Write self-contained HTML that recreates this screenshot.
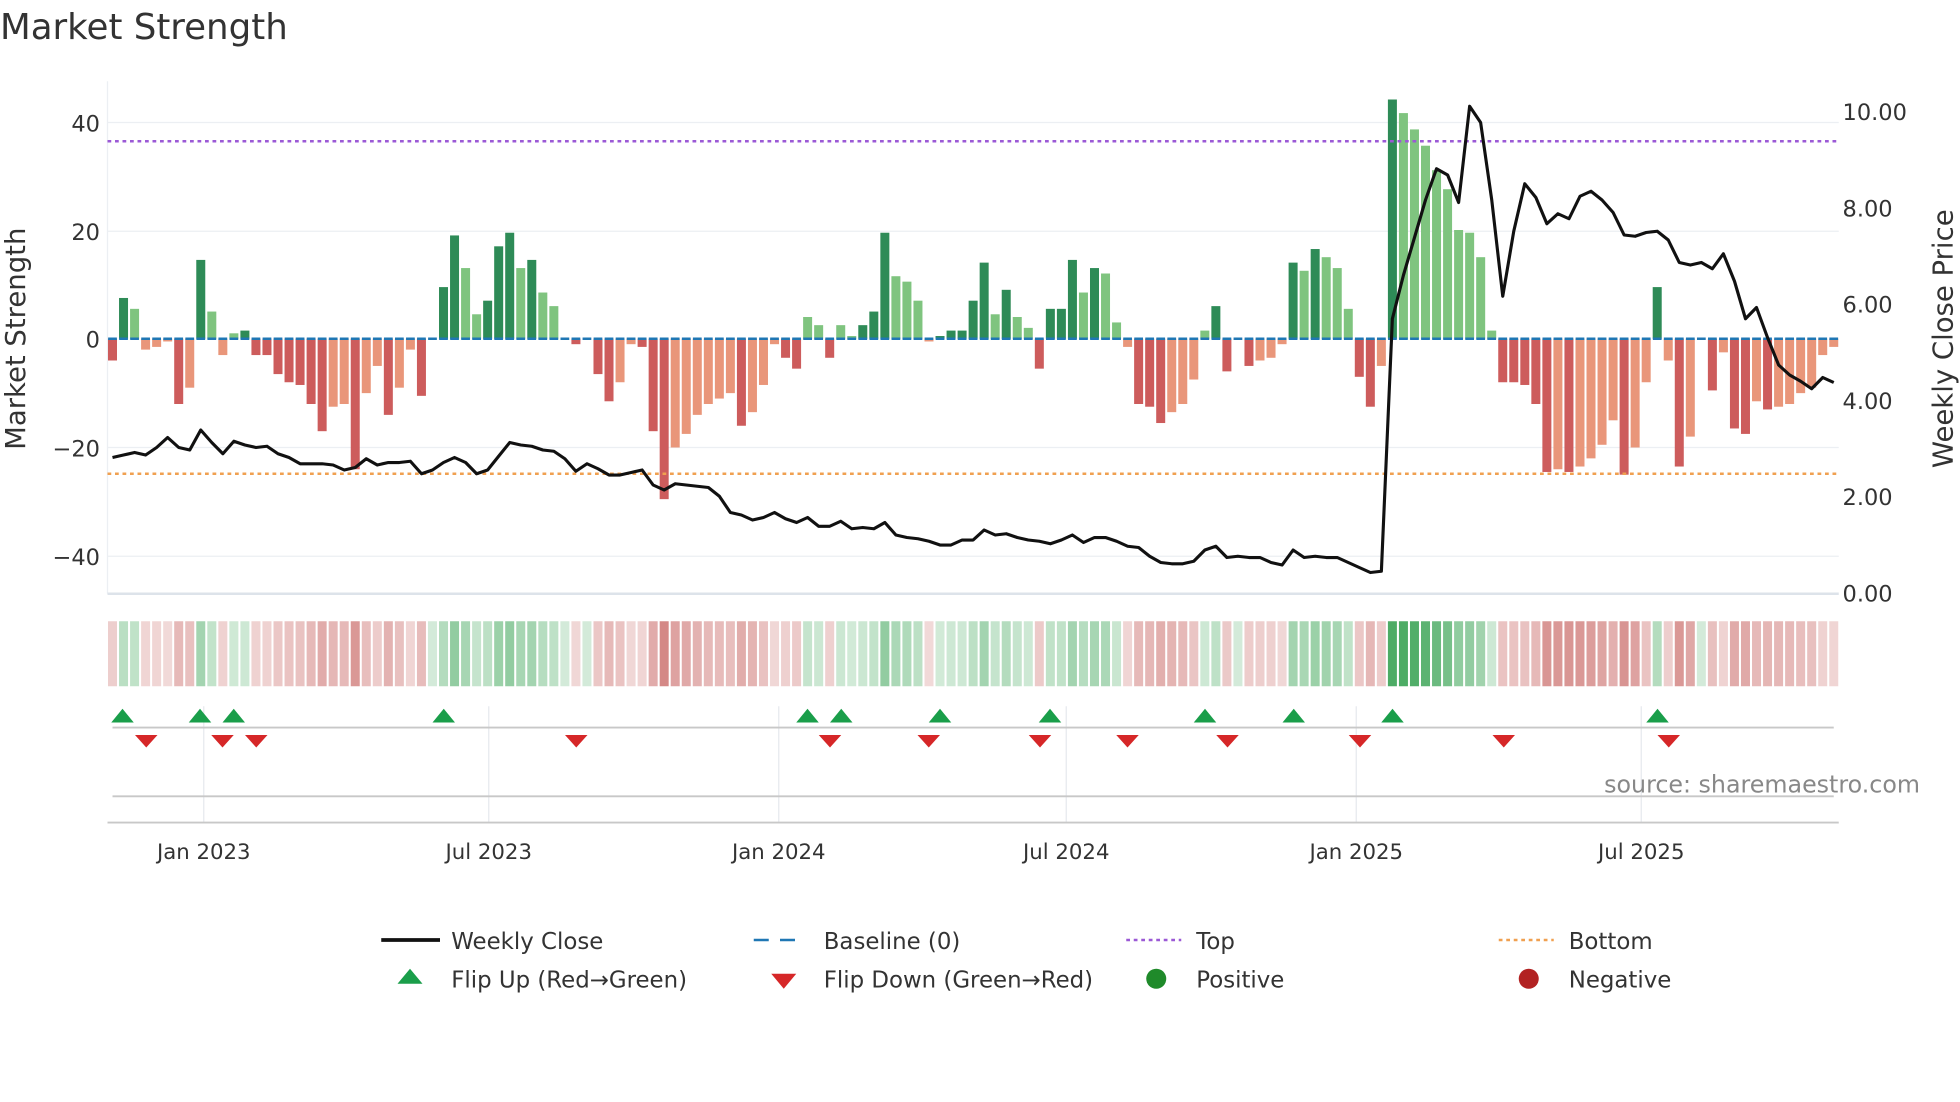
<!DOCTYPE html>
<html><head><meta charset="utf-8"><style>
html,body{margin:0;padding:0;background:#fff;}
svg{display:block;font-family:"DejaVu Sans","Liberation Sans",sans-serif;}
</style></head><body>
<svg id="s" width="1960" height="1102" viewBox="0 0 1568 881.6" xmlns="http://www.w3.org/2000/svg">
<rect width="1568" height="882" fill="#fff"/>
<text x="0" y="31" font-size="28.5" fill="#333">Market Strength</text>
<g stroke="#eceff3" stroke-width="1">
<line x1="86" x2="1471" y1="98" y2="98"/><line x1="86" x2="1471" y1="185" y2="185"/>
<line x1="86" x2="1471" y1="358" y2="358"/><line x1="86" x2="1471" y1="445" y2="445"/>
</g>
<line x1="86" x2="86" y1="65" y2="475" stroke="#eceff3"/>
<line x1="86" x2="1471" y1="475" y2="475" stroke="#dde3ea" stroke-width="2"/>
<g font-size="18" fill="#333">
<text x="80" y="105" text-anchor="end">40</text><text x="80" y="192" text-anchor="end">20</text>
<text x="80" y="278" text-anchor="end">0</text><text x="80" y="365" text-anchor="end">−20</text>
<text x="80" y="452" text-anchor="end">−40</text>
<text x="1474" y="96">10.00</text><text x="1474" y="173">8.00</text><text x="1474" y="250">6.00</text>
<text x="1474" y="327">4.00</text><text x="1474" y="404">2.00</text><text x="1474" y="481">0.00</text>
</g>
<text transform="translate(20,271) rotate(-90)" font-size="22" fill="#333" text-anchor="middle">Market Strength</text>
<text transform="translate(1562,271) rotate(-90)" font-size="22" fill="#333" text-anchor="middle">Weekly Close Price</text>
<g id="bars"></g>
<line x1="86" x2="1471" y1="113" y2="113" stroke="#9b59d6" stroke-width="2" stroke-dasharray="3,3"/>
<line x1="86" x2="1471" y1="379" y2="379" stroke="#f0a050" stroke-width="2" stroke-dasharray="3,3"/>
<g id="heat"></g>
<g stroke="#e6e9ee"><line x1="163" x2="163" y1="565" y2="658"/><line x1="391" x2="391" y1="565" y2="658"/><line x1="623" x2="623" y1="565" y2="658"/><line x1="853" x2="853" y1="565" y2="658"/><line x1="1085" x2="1085" y1="565" y2="658"/><line x1="1313" x2="1313" y1="565" y2="658"/></g>
<line x1="90" x2="1467" y1="582" y2="582" stroke="#c8c8c8" stroke-width="1.5"/>
<line x1="90" x2="1467" y1="637" y2="637" stroke="#c8c8c8" stroke-width="1.5"/>
<line x1="86" x2="1471" y1="658" y2="658" stroke="#c8c8c8" stroke-width="1.5"/>
<g id="flips"></g>
<text x="1536" y="634" font-size="19" fill="#888" text-anchor="end">source: sharemaestro.com</text>
<g font-size="17" fill="#333" text-anchor="middle">
<text x="163" y="687">Jan 2023</text><text x="391" y="687">Jul 2023</text><text x="623" y="687">Jan 2024</text>
<text x="853" y="687">Jul 2024</text><text x="1085" y="687">Jan 2025</text><text x="1313" y="687">Jul 2025</text>
</g>
<g font-size="18.3" fill="#333">
<line x1="305" x2="352" y1="752" y2="752" stroke="#111" stroke-width="3"/><text x="361" y="759">Weekly Close</text>
<line x1="603" x2="645" y1="752" y2="752" stroke="#1f77b4" stroke-width="2" stroke-dasharray="12,9"/><text x="659" y="759">Baseline (0)</text>
<line x1="901" x2="945" y1="752" y2="752" stroke="#9b59d6" stroke-width="2" stroke-dasharray="3,3"/><text x="957" y="759">Top</text>
<line x1="1199" x2="1243" y1="752" y2="752" stroke="#f0a050" stroke-width="2" stroke-dasharray="3,3"/><text x="1255" y="759">Bottom</text>
<path d="M318,787 L328,775 L338,787 Z" fill="#1a9e4a"/><text x="361" y="790">Flip Up (Red→Green)</text>
<path d="M617,779 L637,779 L627,791 Z" fill="#d62728"/><text x="659" y="790">Flip Down (Green→Red)</text>
<circle cx="925" cy="783" r="8" fill="#1f8a2a"/><text x="957" y="790">Positive</text>
<circle cx="1223" cy="783" r="8" fill="#b22222"/><text x="1255" y="790">Negative</text>
</g>
<polyline id="price" fill="none" stroke="#111" stroke-width="2.5" stroke-linejoin="round"/>
</svg>
<script>
var vals=[-4,7.5,5.5,-2,-1.5,-0.5,-12,-9,14.5,5,-3,1,1.5,-3,-3,-6.5,-8,-8.5,-12,-17,-12.5,-12,-24,-10,-5,-14,-9,-2,-10.5,0,9.5,19,13,4.5,7,17,19.5,13,14.5,8.5,6,0,-1,0,-6.5,-11.5,-8,-1,-1.5,-17,-29.5,-20,-17.5,-14,-12,-11,-10,-16,-13.5,-8.5,-1,-3.5,-5.5,4,2.5,-3.5,2.5,0.5,2.5,5,19.5,11.5,10.5,7,-0.5,0.5,1.5,1.5,7,14,4.5,9,4,2,-5.5,5.5,5.5,14.5,8.5,13,12,3,-1.5,-12,-12.5,-15.5,-13.5,-12,-7.5,1.5,6,-6,0,-5,-4,-3.5,-1,14,12.5,16.5,15,13,5.5,-7,-12.5,-5,44,41.5,38.5,35.5,31,27.5,20,19.5,15,1.5,-8,-8,-8.5,-12,-24.5,-24,-24.5,-23.5,-22,-19.5,-15,-25,-20,-8,9.5,-4,-23.5,-18,0,-9.5,-2.5,-16.5,-17.5,-11.5,-13,-12.5,-12,-10,-9,-3,-1.5];
var py=[366,364,362,364,358,350,358,360,344,354,363,353,356,358,357,363,366,371,371,371,372,376,374,367,372,370,370,369,379,376,370,366,370,379,376,365,354,356,357,360,361,367,377,371,375,380,380,378,376,388,392,387,388,389,390,397,410,412,416,414,410,415,418,414,421,421,417,423,422,423,418,428,430,431,433,436,436,432,432,424,428,427,430,432,433,435,432,428,434,430,430,433,437,438,445,450,451,451,449,440,437,446,445,446,446,450,452,440,446,445,446,446,450,454,458,457,255,220,190,160,135,140,162,85,98,160,237,185,147,158,179,171,175,157,153,160,170,188,189,186,185,192,210,212,210,215,203,225,255,246,270,292,300,305,311,302,306];
var NS="http://www.w3.org/2000/svg",n=vals.length,x0=90,dx=(1467-90)/(n-1),u=4.35,z=271;
function el(t,a,p){var e=document.createElementNS(NS,t);for(var k in a)e.setAttribute(k,a[k]);p.appendChild(e);return e;}
var B=document.getElementById('bars'),H=document.getElementById('heat'),pts=[];
for(var i=0;i<n;i++){var v=vals[i],x=x0+i*dx,pv=i?Math.abs(vals[i-1]):0,dark=Math.abs(v)>=pv;
var c=v>=0?(dark?'#2e8b57':'#7fc47f'):(dark?'#cd5c5c':'#e9967a');
var h=Math.abs(v)*u;if(h>0.5)el('rect',{x:x-3.6,y:v>=0?z-h:z,width:7.2,height:h,fill:c},B);
el('line',{x1:x-3.5,x2:x+3.5,y1:z,y2:z,stroke:'#1f77b4','stroke-width':2},B);
var a=Math.min(1,0.25+Math.abs(v)/40*0.75);
el('rect',{x:x-3.6,y:497,width:7.2,height:52,fill:v>=0?'#2e9e4a':'#c0504d','fill-opacity':(a*0.85).toFixed(2)},H);
pts.push(x.toFixed(1)+','+(py[Math.min(i,py.length-1)]));}
document.getElementById('price').setAttribute('points',pts.join(' '));
var F=document.getElementById('flips');
[98,160,187,355,646,673,752,840,964,1035,1114,1326].forEach(function(x){el('path',{d:'M'+(x-9)+',578 L'+x+',567 L'+(x+9)+',578 Z',fill:'#1a9e4a'},F);});
[117,178,205,461,664,743,832,902,982,1088,1203,1335].forEach(function(x){el('path',{d:'M'+(x-9)+',588 L'+(x+9)+',588 L'+x+',598 Z',fill:'#d62728'},F);});
</script>
</body></html>
